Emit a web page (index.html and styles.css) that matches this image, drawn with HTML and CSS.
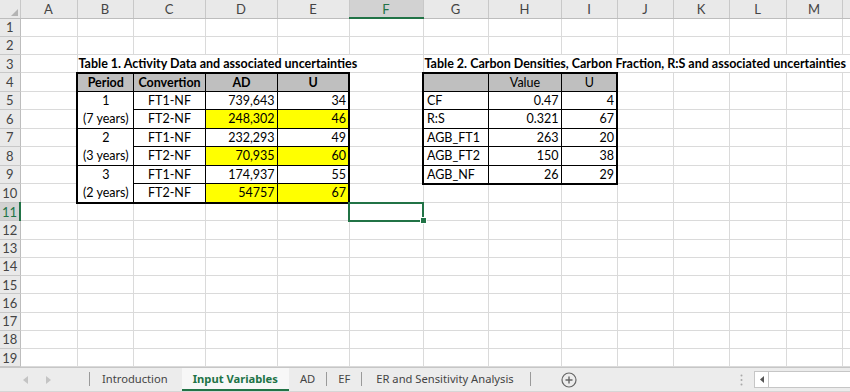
FILE: index.html
```html
<!DOCTYPE html>
<html lang="en">
  <head>
    <meta charset="UTF-8" />
    <meta name="viewport" content="width=device-width, initial-scale=1.0" />
    <title>Input Variables</title>
    <link rel="stylesheet" href="styles.css">
  </head>
  <body>
    <div class="workbook">
      <table class="sheet">
        <colgroup>
          <col class="col-rh">
          <col class="col-a">
          <col class="col-b">
          <col class="col-c">
          <col class="col-d">
          <col class="col-e">
          <col class="col-f">
          <col class="col-g">
          <col class="col-h">
          <col class="col-i">
          <col class="col-j">
          <col class="col-k">
          <col class="col-l">
          <col class="col-m">
          <col class="col-n">
        </colgroup>

        <tr class="col-head">
          <th class="corner">
            <svg width="7" height="7" viewBox="0 0 7 7"><polygon points="7,0 7,7 0,7" fill="#b4b4b4" /></svg>
          </th>
          <th>A</th><th>B</th><th>C</th><th>D</th><th>E</th>
          <th class="active-col">F</th>
          <th>G</th><th>H</th><th>I</th><th>J</th><th>K</th><th>L</th><th>M</th><th></th>
        </tr>

        <tr>
          <th class="rh">1</th>
          <td></td><td></td><td></td><td></td><td></td><td></td><td></td><td></td><td></td><td></td><td></td><td></td><td></td><td></td>
        </tr>
        <tr>
          <th class="rh">2</th>
          <td></td><td></td><td></td><td></td><td></td><td></td><td></td><td></td><td></td><td></td><td></td><td></td><td></td><td></td>
        </tr>
        <tr>
          <th class="rh">3</th>
          <td></td>
          <td class="title" colspan="5">Table 1. Activity Data and associated uncertainties</td>
          <td class="title" colspan="8">Table 2. Carbon Densities, Carbon Fraction, R:S and associated uncertainties</td>
        </tr>

        <!-- Table 1 header / Table 2 header -->
        <tr>
          <th class="rh">4</th>
          <td></td>
          <td class="t1 head bold top left center">Period</td>
          <td class="t1 head bold top center">Convertion</td>
          <td class="t1 head bold top center">AD</td>
          <td class="t1 head bold top right-edge center">U</td>
          <td></td>
          <td class="t2 head top left"></td>
          <td class="t2 head top center">Value</td>
          <td class="t2 head top right-edge center">U</td>
          <td></td><td></td><td></td><td></td><td></td>
        </tr>

        <tr>
          <th class="rh">5</th>
          <td></td>
          <td class="t1 left center period" rowspan="2">1<br>(7 years)</td>
          <td class="t1 center">FT1-NF</td>
          <td class="t1 num">739,643</td>
          <td class="t1 num right-edge">34</td>
          <td></td>
          <td class="t2 left">CF</td>
          <td class="t2 num">0.47</td>
          <td class="t2 num right-edge">4</td>
          <td></td><td></td><td></td><td></td><td></td>
        </tr>
        <tr>
          <th class="rh">6</th>
          <td></td>
          <td class="t1 center">FT2-NF</td>
          <td class="t1 num yellow">248,302</td>
          <td class="t1 num yellow right-edge">46</td>
          <td></td>
          <td class="t2 left">R:S</td>
          <td class="t2 num">0.321</td>
          <td class="t2 num right-edge">67</td>
          <td></td><td></td><td></td><td></td><td></td>
        </tr>
        <tr>
          <th class="rh">7</th>
          <td></td>
          <td class="t1 left center period" rowspan="2">2<br>(3 years)</td>
          <td class="t1 center">FT1-NF</td>
          <td class="t1 num">232,293</td>
          <td class="t1 num right-edge">49</td>
          <td></td>
          <td class="t2 left">AGB_FT1</td>
          <td class="t2 num">263</td>
          <td class="t2 num right-edge">20</td>
          <td></td><td></td><td></td><td></td><td></td>
        </tr>
        <tr>
          <th class="rh">8</th>
          <td></td>
          <td class="t1 center">FT2-NF</td>
          <td class="t1 num yellow">70,935</td>
          <td class="t1 num yellow right-edge">60</td>
          <td></td>
          <td class="t2 left">AGB_FT2</td>
          <td class="t2 num">150</td>
          <td class="t2 num right-edge">38</td>
          <td></td><td></td><td></td><td></td><td></td>
        </tr>
        <tr>
          <th class="rh">9</th>
          <td></td>
          <td class="t1 left bottom center period" rowspan="2">3<br>(2 years)</td>
          <td class="t1 center">FT1-NF</td>
          <td class="t1 num">174,937</td>
          <td class="t1 num right-edge">55</td>
          <td></td>
          <td class="t2 left bottom">AGB_NF</td>
          <td class="t2 num bottom">26</td>
          <td class="t2 num bottom right-edge">29</td>
          <td></td><td></td><td></td><td></td><td></td>
        </tr>
        <tr>
          <th class="rh">10</th>
          <td></td>
          <td class="t1 center bottom">FT2-NF</td>
          <td class="t1 num yellow bottom">54757</td>
          <td class="t1 num yellow bottom right-edge">67</td>
          <td></td><td></td><td></td><td></td><td></td><td></td><td></td><td></td><td></td>
        </tr>

        <tr>
          <th class="rh active-row">11</th>
          <td></td><td></td><td></td><td></td><td></td>
          <td class="active-cell"></td>
          <td></td><td></td><td></td><td></td><td></td><td></td><td></td><td></td>
        </tr>
        <tr>
          <th class="rh">12</th>
          <td></td><td></td><td></td><td></td><td></td><td></td><td></td><td></td><td></td><td></td><td></td><td></td><td></td><td></td>
        </tr>
        <tr>
          <th class="rh">13</th>
          <td></td><td></td><td></td><td></td><td></td><td></td><td></td><td></td><td></td><td></td><td></td><td></td><td></td><td></td>
        </tr>
        <tr>
          <th class="rh">14</th>
          <td></td><td></td><td></td><td></td><td></td><td></td><td></td><td></td><td></td><td></td><td></td><td></td><td></td><td></td>
        </tr>
        <tr>
          <th class="rh">15</th>
          <td></td><td></td><td></td><td></td><td></td><td></td><td></td><td></td><td></td><td></td><td></td><td></td><td></td><td></td>
        </tr>
        <tr>
          <th class="rh">16</th>
          <td></td><td></td><td></td><td></td><td></td><td></td><td></td><td></td><td></td><td></td><td></td><td></td><td></td><td></td>
        </tr>
        <tr>
          <th class="rh">17</th>
          <td></td><td></td><td></td><td></td><td></td><td></td><td></td><td></td><td></td><td></td><td></td><td></td><td></td><td></td>
        </tr>
        <tr>
          <th class="rh">18</th>
          <td></td><td></td><td></td><td></td><td></td><td></td><td></td><td></td><td></td><td></td><td></td><td></td><td></td><td></td>
        </tr>
        <tr>
          <th class="rh">19</th>
          <td></td><td></td><td></td><td></td><td></td><td></td><td></td><td></td><td></td><td></td><td></td><td></td><td></td><td></td>
        </tr>
      </table>

      <div class="tabs">
        <div class="tab-nav">
          <svg width="5" height="8" viewBox="0 0 5 8"><polygon points="5,0 5,8 0,4" fill="#c4c4c4" /></svg>
          <svg width="5" height="8" viewBox="0 0 5 8"><polygon points="0,0 0,8 5,4" fill="#c4c4c4" /></svg>
        </div>
        <span class="sep"></span>
        <div class="tab tab-intro">Introduction</div>
        <div class="tab active">Input Variables</div>
        <div class="tab">AD</div>
        <span class="sep"></span>
        <div class="tab">EF</div>
        <span class="sep"></span>
        <div class="tab tab-er">ER and Sensitivity Analysis</div>
        <span class="sep"></span>
        <div class="add-sheet">
          <svg width="16" height="16" viewBox="0 0 16 16">
            <circle cx="8" cy="8" r="7" fill="none" stroke="#666" stroke-width="1.2" />
            <path d="M8 4.5v7M4.5 8h7" stroke="#666" stroke-width="1.4" />
          </svg>
        </div>
        <div class="tab-right">
          <svg class="grip" width="3" height="12" viewBox="0 0 3 12">
            <circle cx="1.5" cy="1.5" r="1" fill="#a8a8a8" />
            <circle cx="1.5" cy="6" r="1" fill="#a8a8a8" />
            <circle cx="1.5" cy="10.5" r="1" fill="#a8a8a8" />
          </svg>
          <div class="hscroll">
            <span class="hscroll-btn">
              <svg width="4" height="7" viewBox="0 0 4 7"><polygon points="4,0 4,7 0,3.5" fill="#555" /></svg>
            </span>
          </div>
        </div>
      </div>
    </div>
  </body>
</html>
```

FILE: styles.css
```css
html,
body {
  margin: 0;
  padding: 0;
}

body {
  width: 850px;
  height: 392px;
  overflow: hidden;
  background: #fff;
}

.workbook {
  display: flex;
  flex-direction: column;
  height: 392px;
}

/* sheet grid */

.sheet {
  table-layout: fixed;
  border-collapse: collapse;
  width: 850px;
  font-family: Lato, "Liberation Sans", sans-serif;
  font-size: 12.5px;
  color: #000;
}

.col-rh { width: 20px; }
.col-a { width: 57px; }
.col-b { width: 56px; }
.col-c { width: 72px; }
.col-d { width: 72px; }
.col-e { width: 72px; }
.col-f { width: 74px; }
.col-g { width: 65px; }
.col-h { width: 73px; }
.col-i { width: 56px; }
.col-j { width: 56px; }
.col-k { width: 56px; }
.col-l { width: 57px; }
.col-m { width: 56px; }
.col-n { width: 8px; }

.sheet tr {
  height: 18.25px;
}

.sheet td {
  border: 1px solid #dadada;
  padding: 1px 2px 0 3px;
  white-space: nowrap;
  overflow: visible;
  line-height: 14px;
}

.col-head {
  height: 18px !important;
}

.col-head th {
  background: #e9e9e9;
  border: 1px solid #c8c8c8;
  border-top: none;
  border-bottom-color: #bdbdbd;
  font-weight: normal;
  color: #444;
  font-size: 13px;
  padding: 0;
  line-height: 14px;
}

.col-head .corner {
  text-align: right;
  vertical-align: bottom;
  padding: 0 2px 2px 0;
  line-height: 0;
  border-left: none;
}

.col-head .active-col {
  background: #d2d2d2;
  color: #217346;
  border-bottom: 2px solid #217346;
}

.rh {
  background: #e9e9e9;
  border: 1px solid #c8c8c8;
  border-left: none;
  border-right-color: #bdbdbd;
  font-weight: normal;
  color: #444;
  font-size: 13px;
  padding: 0;
  line-height: 14px;
  text-align: center;
}

.rh.active-row {
  background: #d2d2d2;
  color: #217346;
  border-right: 2px solid #217346;
}

.title {
  font-weight: bold;
  padding-left: 1px !important;
  padding-top: 2px !important;
}

/* bordered tables */

.t1,
.t2 {
  border: 1px solid #000 !important;
}

.t1.top,
.t2.top {
  border-top-width: 2px !important;
}

.t1.left,
.t2.left {
  border-left-width: 2px !important;
}

.t1.right-edge,
.t2.right-edge {
  border-right-width: 2px !important;
}

.t1.bottom,
.t2.bottom {
  border-bottom-width: 2px !important;
}

.head {
  background: #bfbfbf;
}

.bold {
  font-weight: bold;
}

.center {
  text-align: center;
}

.num {
  text-align: right;
}

.yellow {
  background: #ffff00;
}

.period {
  line-height: 18px !important;
  padding-top: 0 !important;
}

.active-cell {
  position: relative;
  outline: 2px solid #217346;
  outline-offset: -1px;
}

.active-cell::after {
  content: "";
  position: absolute;
  right: -4px;
  bottom: -4px;
  width: 5px;
  height: 5px;
  background: #217346;
  border: 1px solid #fff;
}

/* sheet tabs */

.tabs {
  flex: 1;
  display: flex;
  align-items: stretch;
  background: #ececec;
  border-top: 1px solid #c6c6c6;
  border-bottom: 1px solid #d6d6d6;
  font-family: "Noto Sans", "Open Sans", sans-serif;
  font-size: 11.2px;
  color: #444;
}

.tab-nav {
  width: 89px;
  display: flex;
  align-items: center;
  gap: 18px;
  padding-left: 23px;
  box-sizing: border-box;
}

.sep {
  width: 1px;
  background: #9a9a9a;
  margin: 4px 0 5px;
}

.tab {
  display: flex;
  align-items: center;
  padding: 0 11px 2px;
}

.tab-intro {
  padding-left: 12px;
  padding-right: 14px;
}

.tab-er {
  padding: 0 16px 2px 14px;
}

.tab.active {
  background: #f7f7f7;
  color: #217346;
  font-weight: bold;
  border-bottom: 2px solid #217346;
  padding-bottom: 0;
}

.add-sheet {
  display: flex;
  align-items: center;
  padding-left: 30px;
}

.tab-right {
  margin-left: auto;
  display: flex;
  align-items: center;
  gap: 11px;
}

.hscroll {
  width: 96px;
  height: 17px;
  background: #fff;
  border: 1px solid #c6c6c6;
  border-right: none;
  box-sizing: border-box;
  display: flex;
}

.hscroll-btn {
  width: 13px;
  border-right: 1px solid #c6c6c6;
  display: flex;
  align-items: center;
  justify-content: center;
}
```
